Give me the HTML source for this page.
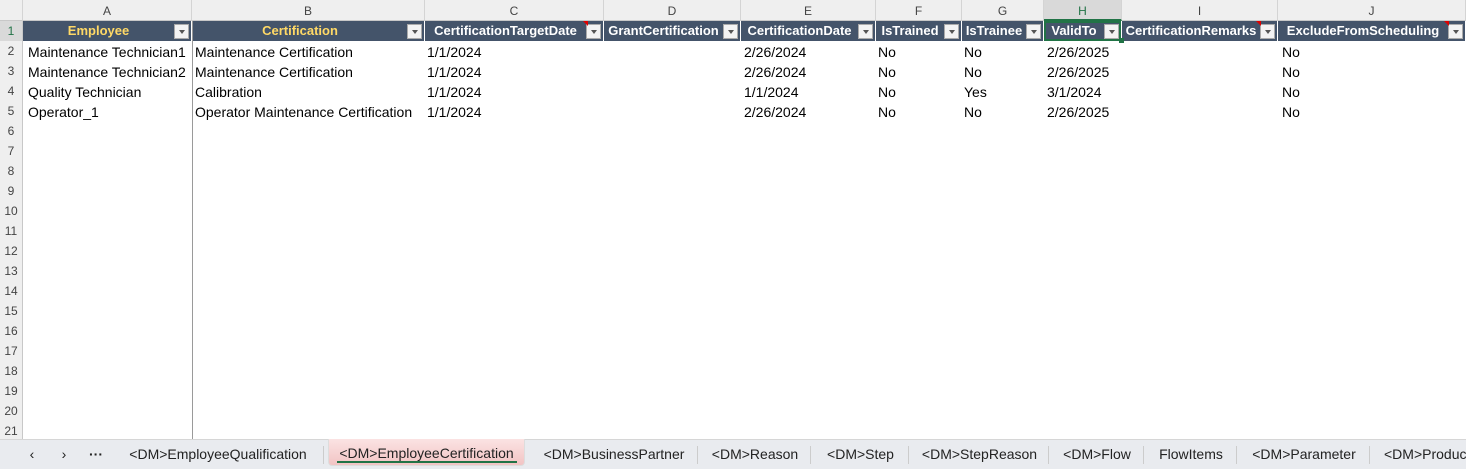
<!DOCTYPE html>
<html><head><meta charset="utf-8"><style>
*{margin:0;padding:0;box-sizing:border-box}
body{width:1466px;height:469px;overflow:hidden;background:#fff;font-family:"Liberation Sans",Arial,sans-serif;font-size:14px;color:#000;position:relative}
.a{position:absolute;white-space:nowrap}
.ch{position:absolute;top:0;height:21px;background:#efefef;border-right:1px solid #d4d4d4;border-bottom:1px solid #c8c8c8;text-align:center;line-height:22px;color:#444;font-size:12px}
.rn{position:absolute;left:0;width:23px;height:20px;text-align:center;line-height:21px;color:#444;font-size:12px;background:#efefef;border-right:1px solid #c8c8c8}
.h{position:absolute;top:21px;height:20px;background:#44546a;color:#fff;font-weight:bold;line-height:20px;font-size:13px;border-right:1px solid #fff;overflow:hidden}
.h span{position:absolute;left:0;right:17px;text-align:center;overflow:hidden}
.h i{position:absolute;right:2px;top:3px;width:15px;height:15px;background:#f3f3f3;border:1px solid #aaa}
.h i:after{content:"";position:absolute;left:4px;top:5px;border-left:3px solid transparent;border-right:3px solid transparent;border-top:4px solid #555}
.y{color:#ffd966}
.c{position:absolute;height:20px;line-height:21px;padding-left:4px;white-space:nowrap}
.tab{position:absolute;top:439px;height:30px;line-height:31px;text-align:center;color:#222;font-size:14px;white-space:nowrap}
.sep{position:absolute;top:446px;width:1px;height:18px;background:#ccc}
</style></head><body>
<div class="ch" style="left:0;width:23px;background:#efefef"></div>
<div class="ch" style="left:23px;width:169px">A</div>
<div class="ch" style="left:192px;width:233px">B</div>
<div class="ch" style="left:425px;width:179px">C</div>
<div class="ch" style="left:604px;width:137px">D</div>
<div class="ch" style="left:741px;width:135px">E</div>
<div class="ch" style="left:876px;width:86px">F</div>
<div class="ch" style="left:962px;width:82px">G</div>
<div class="ch" style="left:1044px;width:78px;background:#d9d9d9;color:#217346;border-bottom:2px solid #217346">H</div>
<div class="ch" style="left:1122px;width:156px">I</div>
<div class="ch" style="left:1278px;width:188px">J</div>

<div class="rn" style="top:21px;color:#217346;background:#d9d9d9">1</div>
<div class="rn" style="top:41px">2</div><div class="rn" style="top:61px">3</div><div class="rn" style="top:81px">4</div><div class="rn" style="top:101px">5</div><div class="rn" style="top:121px">6</div><div class="rn" style="top:141px">7</div><div class="rn" style="top:161px">8</div><div class="rn" style="top:181px">9</div><div class="rn" style="top:201px">10</div><div class="rn" style="top:221px">11</div><div class="rn" style="top:241px">12</div><div class="rn" style="top:261px">13</div><div class="rn" style="top:281px">14</div><div class="rn" style="top:301px">15</div><div class="rn" style="top:321px">16</div><div class="rn" style="top:341px">17</div><div class="rn" style="top:361px">18</div><div class="rn" style="top:381px">19</div><div class="rn" style="top:401px">20</div><div class="rn" style="top:421px;height:18px">21</div>

<div class="a" style="left:192px;top:21px;width:1px;height:418px;background:#9a9a9a"></div>

<div class="h" style="left:23px;width:169px"><span class="y">Employee</span><i></i></div>
<div class="h" style="left:193px;width:232px"><span class="y">Certification</span><i></i></div>
<div class="h" style="left:425px;width:179px"><span>CertificationTargetDate</span><i></i></div>
<div class="h" style="left:604px;width:137px"><span>GrantCertification</span><i></i></div>
<div class="h" style="left:741px;width:135px"><span>CertificationDate</span><i></i></div>
<div class="h" style="left:876px;width:86px"><span>IsTrained</span><i></i></div>
<div class="h" style="left:962px;width:82px"><span>IsTrainee</span><i></i></div>
<div class="h" style="left:1044px;width:78px;box-shadow:inset 0 0 0 2px #217346"><span>ValidTo</span><i></i></div>
<div class="h" style="left:1122px;width:156px"><span>CertificationRemarks</span><i></i></div>
<div class="h" style="left:1278px;width:188px"><span>ExcludeFromScheduling</span><i></i></div>
<div class="a" style="left:583px;top:21px;border-left:5px solid transparent;border-top:5px solid #e00000"></div>
<div class="a" style="left:1256px;top:21px;border-left:5px solid transparent;border-top:5px solid #e00000"></div>
<div class="a" style="left:1444px;top:21px;border-left:5px solid transparent;border-top:5px solid #e00000"></div>
<div class="a" style="left:1119px;top:38px;width:5px;height:5px;background:#217346"></div>

<div class="c" style="left:24px;top:42px">Maintenance Technician1</div>
<div class="c" style="left:24px;top:62px">Maintenance Technician2</div>
<div class="c" style="left:24px;top:82px">Quality Technician</div>
<div class="c" style="left:24px;top:102px">Operator_1</div>
<div class="c" style="left:191px;top:42px">Maintenance Certification</div>
<div class="c" style="left:191px;top:62px">Maintenance Certification</div>
<div class="c" style="left:191px;top:82px">Calibration</div>
<div class="c" style="left:191px;top:102px">Operator Maintenance Certification</div>
<div class="c" style="left:423px;top:42px">1/1/2024</div><div class="c" style="left:423px;top:62px">1/1/2024</div><div class="c" style="left:423px;top:82px">1/1/2024</div><div class="c" style="left:423px;top:102px">1/1/2024</div>
<div class="c" style="left:740px;top:42px">2/26/2024</div><div class="c" style="left:740px;top:62px">2/26/2024</div><div class="c" style="left:740px;top:82px">1/1/2024</div><div class="c" style="left:740px;top:102px">2/26/2024</div>
<div class="c" style="left:874px;top:42px">No</div><div class="c" style="left:874px;top:62px">No</div><div class="c" style="left:874px;top:82px">No</div><div class="c" style="left:874px;top:102px">No</div>
<div class="c" style="left:960px;top:42px">No</div><div class="c" style="left:960px;top:62px">No</div><div class="c" style="left:960px;top:82px">Yes</div><div class="c" style="left:960px;top:102px">No</div>
<div class="c" style="left:1043px;top:42px">2/26/2025</div><div class="c" style="left:1043px;top:62px">2/26/2025</div><div class="c" style="left:1043px;top:82px">3/1/2024</div><div class="c" style="left:1043px;top:102px">2/26/2025</div>
<div class="c" style="left:1278px;top:42px">No</div><div class="c" style="left:1278px;top:62px">No</div><div class="c" style="left:1278px;top:82px">No</div><div class="c" style="left:1278px;top:102px">No</div>

<div class="a" style="left:0;top:439px;width:1466px;height:30px;background:#e9ebef;border-top:1px solid #d6d6d6"></div>
<div class="tab" style="left:22px;width:20px">&#8249;</div>
<div class="tab" style="left:54px;width:20px">&#8250;</div>
<div class="tab" style="left:86px;width:20px;font-weight:bold">&middot;&middot;&middot;</div>
<div class="tab" style="left:118px;width:200px">&lt;DM&gt;EmployeeQualification</div>
<div class="sep" style="left:323px"></div>
<div class="a" style="left:328px;top:439px;width:197px;height:27px;background:linear-gradient(#fbe3e3,#f2c4c4);border:1px solid #ddd;border-top:none;border-radius:0 0 4px 4px"></div>
<div class="tab" style="left:328px;width:197px;line-height:28px">&lt;DM&gt;EmployeeCertification</div>
<div class="a" style="left:337px;top:461px;width:180px;height:2px;background:#217346"></div>
<div class="tab" style="left:535px;width:158px">&lt;DM&gt;BusinessPartner</div>
<div class="sep" style="left:697px"></div>
<div class="tab" style="left:700px;width:110px">&lt;DM&gt;Reason</div>
<div class="sep" style="left:810px"></div>
<div class="tab" style="left:813px;width:95px">&lt;DM&gt;Step</div>
<div class="sep" style="left:908px"></div>
<div class="tab" style="left:911px;width:137px">&lt;DM&gt;StepReason</div>
<div class="sep" style="left:1048px"></div>
<div class="tab" style="left:1051px;width:92px">&lt;DM&gt;Flow</div>
<div class="sep" style="left:1143px"></div>
<div class="tab" style="left:1146px;width:90px">FlowItems</div>
<div class="sep" style="left:1236px"></div>
<div class="tab" style="left:1239px;width:130px">&lt;DM&gt;Parameter</div>
<div class="sep" style="left:1369px"></div>
<div class="tab" style="left:1384px;text-align:left">&lt;DM&gt;Product</div>
</body></html>
